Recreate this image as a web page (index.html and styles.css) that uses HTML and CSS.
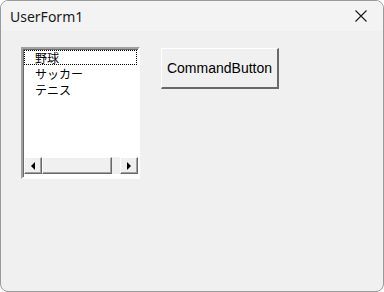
FILE: index.html
```html
<!DOCTYPE html>
<html lang="ja">
<head>
<meta charset="utf-8">
<link rel="stylesheet" href="styles.css">
</head>
<body>
<div class="window">
  <div class="titlebar">
    <span class="title">UserForm1</span>
    <svg class="close" width="12" height="12" viewBox="0 0 12 12"><path d="M0.5 0.5 L11.5 11.5 M11.5 0.5 L0.5 11.5" stroke="#1a1a1a" stroke-width="1.1" fill="none"/></svg>
  </div>
  <div class="client">
    <div class="listbox">
      <div class="items">
        <div class="item focus">野球</div>
        <div class="item">サッカー</div>
        <div class="item">テニス</div>
      </div>
      <div class="hscroll">
        <div class="sbtn"><svg width="4" height="8" viewBox="0 0 4 8"><path d="M4 0 L0 4 L4 8 Z" fill="#000"/></svg></div>
        <div class="thumb"></div>
        <div class="track"></div>
        <div class="sbtn"><svg width="4" height="8" viewBox="0 0 4 8"><path d="M0 0 L4 4 L0 8 Z" fill="#000"/></svg></div>
      </div>
    </div>
    <div class="cmdbtn">CommandButton</div>
  </div>
</div>
</body>
</html>
```
FILE: styles.css
```css
html, body {
  margin: 0;
  padding: 0;
  background: #ffffff;
}
.window {
  box-sizing: border-box;
  width: 384px;
  height: 292px;
  border: 1px solid #9a9a9a;
  border-radius: 8px;
  background: #f0f0f0;
  overflow: hidden;
  display: flex;
  flex-direction: column;
}
.titlebar {
  height: 30px;
  flex: none;
  display: flex;
  align-items: center;
  justify-content: space-between;
  padding: 0 16px 0 9px;
  background: #f3f3f3;
}
.title {
  font-family: "Noto Sans", sans-serif;
  font-size: 14px;
  color: #1a1a1a;
}
.client {
  flex: 1;
  display: flex;
  align-items: flex-start;
  padding: 16px 0 0 20px;
}
.listbox {
  box-sizing: border-box;
  width: 119px;
  height: 132px;
  border-style: solid;
  border-width: 2px;
  border-color: #a0a0a0 #ffffff #ffffff #a0a0a0;
  background: #ffffff;
  display: flex;
  flex-direction: column;
  box-shadow: inset 1px 1px 0 #696969;
}
.items {
  flex: 1;
  padding: 1px 0 0 1px;
}
.item {
  height: 16px;
  line-height: 15px;
  font-family: "Noto Sans CJK JP", sans-serif;
  font-size: 12px;
  color: #000;
  padding-left: 11px;
  box-sizing: border-box;
}
.item.focus {
  height: 15px;
  outline: 1px dotted #000;
  outline-offset: -1px;
  margin: 0 1px 1px 0;
}
.hscroll {
  height: 17px;
  display: flex;
  margin: 0 0 3px 1px;
  background: #f0f0f0;
}
.sbtn {
  box-sizing: border-box;
  width: 18px;
  height: 17px;
  background: #f0f0f0;
  border-style: solid;
  border-width: 1px;
  border-color: #ffffff #696969 #696969 #ffffff;
  box-shadow: inset -1px -1px 0 #a0a0a0;
  display: flex;
  align-items: center;
  justify-content: center;
}
.thumb {
  box-sizing: border-box;
  width: 70px;
  height: 17px;
  background: #f0f0f0;
  border-style: solid;
  border-width: 1px;
  border-color: #ffffff #696969 #696969 #ffffff;
  box-shadow: inset -1px -1px 0 #a0a0a0;
}
.track {
  flex: 1;
  background: #f0f0f0;
}
.cmdbtn {
  box-sizing: border-box;
  width: 118px;
  height: 41px;
  margin: 1px 0 0 21px;
  background: #f0f0f0;
  border-style: solid;
  border-width: 1px 2px 2px 1px;
  border-color: #ffffff #696969 #696969 #ffffff;
  display: flex;
  align-items: center;
  justify-content: center;
  font-family: "Liberation Sans", sans-serif;
  font-size: 14px;
  color: #000;
}
```
